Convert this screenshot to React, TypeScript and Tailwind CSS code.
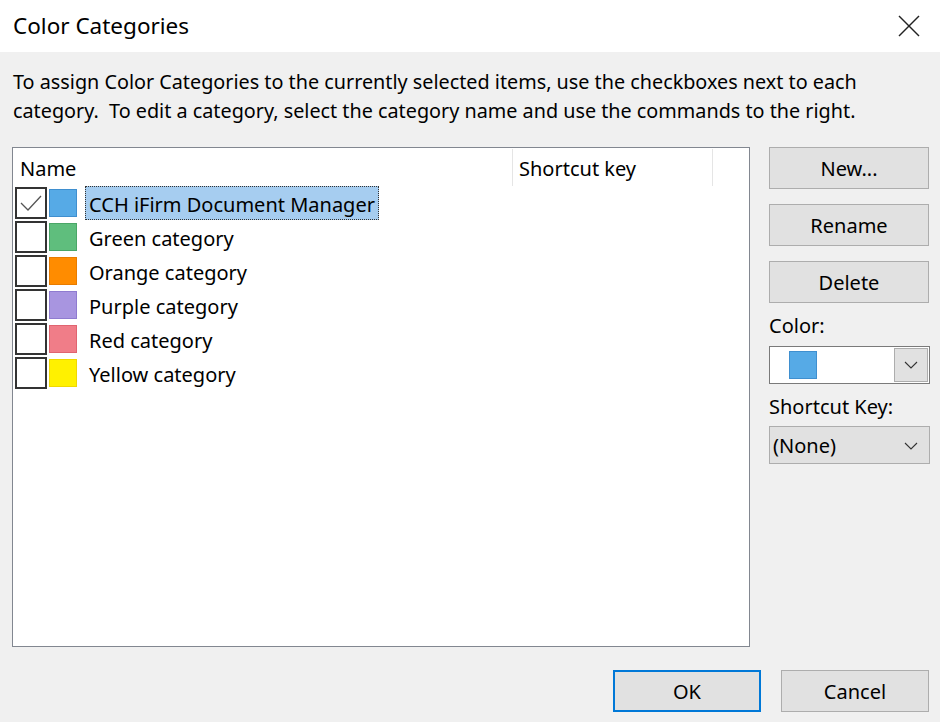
import React from 'react';

const font = { fontFamily: '"Noto Sans", "Open Sans", Arial, sans-serif' };

type Category = { name: string; color: string; border: string; checked?: boolean; selected?: boolean };

const categories: Category[] = [
  { name: 'CCH iFirm Document Manager', color: '#56aae6', border: '#3f8fcf', checked: true, selected: true },
  { name: 'Green category', color: '#5fbe7d', border: '#4aa667' },
  { name: 'Orange category', color: '#ff8c00', border: '#e87c00' },
  { name: 'Purple category', color: '#a895e0', border: '#8f7bd0' },
  { name: 'Red category', color: '#f07d88', border: '#e06470' },
  { name: 'Yellow category', color: '#fff100', border: '#f0d800' },
];

const Chevron = () => (
  <svg width="14" height="8" viewBox="0 0 14 8" fill="none">
    <polyline points="1,1 7,7 13,1" stroke="#333" strokeWidth="1.1" />
  </svg>
);

const CategoryRow: React.FC<{ cat: Category }> = ({ cat }) => (
  <div className="flex h-[34px] items-start">
    <div className="ml-[2px] flex h-[32px] w-[32px] items-center justify-center border-2 border-[#333333] bg-white">
      {cat.checked && (
        <svg width="24" height="20" viewBox="0 0 24 20" fill="none">
          <polyline points="2,10 9,17 22,3" stroke="#555" strokeWidth="1.3" />
        </svg>
      )}
    </div>
    <div
      className="ml-[2px] mt-[2px] h-[28px] w-[28px] border"
      style={{ backgroundColor: cat.color, borderColor: cat.border }}
    />
    <div
      className={
        cat.selected
          ? 'ml-[8px] -mt-px flex h-[34px] items-center border border-dotted border-[#333] bg-[#a6cdf0] px-[3px] pt-[3px] text-[20px] text-black'
          : 'ml-[8px] flex h-[32px] items-center px-[4px] pt-[3px] text-[20px] text-black'
      }
    >
      {cat.name}
    </div>
  </div>
);

const SideButton: React.FC<{ label: string }> = ({ label }) => (
  <button className="flex h-[42px] w-[160px] items-center justify-center border border-[#adadad] bg-[#e1e1e1] pt-px text-[20px] text-black">
    {label}
  </button>
);

export default function App() {
  return (
    <div className="flex h-[722px] w-[940px] flex-col overflow-hidden bg-[#f0f0f0]" style={font}>
      <div className="flex h-[52px] shrink-0 items-center justify-between bg-white pl-[13px] pr-[20px]">
        <span className="text-[22.5px] text-black">Color Categories</span>
        <svg width="22" height="22" viewBox="0 0 22 22" fill="none">
          <line x1="1" y1="1" x2="21" y2="21" stroke="#222" strokeWidth="1.4" />
          <line x1="21" y1="1" x2="1" y2="21" stroke="#222" strokeWidth="1.4" />
        </svg>
      </div>

      <p className="mt-[15px] pl-[13px] text-[19.8px] leading-[29px] text-black">
        To assign Color Categories to the currently selected items, use the checkboxes next to each
        <br />
        category.&nbsp; To edit a category, select the category name and use the commands to the right.
      </p>

      <div className="mt-[22px] flex pl-[12px]">
        <div className="h-[500px] w-[738px] border border-[#828790] bg-white">
          <div className="flex h-[39px] items-stretch text-[20px] text-black">
            <div className="flex w-[499px] items-center pl-[7px] pt-[3px]">Name</div>
            <div className="my-[1px] w-px bg-[#e5e5e5]" />
            <div className="flex w-[199px] items-center pl-[6px] pt-[3px]">Shortcut key</div>
            <div className="my-[1px] w-px bg-[#e5e5e5]" />
          </div>
          <div>
            {categories.map((c) => (
              <CategoryRow key={c.name} cat={c} />
            ))}
          </div>
        </div>

        <div className="ml-[19px] flex w-[161px] flex-col">
          <div className="flex flex-col gap-[15px]">
            <SideButton label="New..." />
            <SideButton label="Rename" />
            <SideButton label="Delete" />
          </div>
          <div className="mt-[9px] text-[20px] leading-[28px] text-black">Color:</div>
          <div className="mt-[6px] flex h-[38px] w-[161px] items-center border border-[#7a7a7a] bg-white">
            <div className="ml-[19px] h-[28px] w-[28px] border border-[#3f8fcf] bg-[#56aae6]" />
            <div className="ml-auto mr-[1px] flex h-[34px] w-[34px] items-center justify-center border border-[#adadad] bg-[#e1e1e1]">
              <Chevron />
            </div>
          </div>
          <div className="mt-[9px] text-[20px] leading-[28px] text-black">Shortcut Key:</div>
          <div className="mt-[5px] flex h-[38px] w-[161px] items-center justify-between border border-[#adadad] bg-[#e1e1e1] pl-[3px] pr-[11px] pt-px text-[20px] text-black">
            <span>(None)</span>
            <Chevron />
          </div>
        </div>
      </div>

      <div className="mt-[23px] flex justify-end gap-[20px] pr-[11px]">
        <button className="flex h-[42px] w-[148px] items-center justify-center border-2 border-[#0078d7] bg-[#e1e1e1] pt-px text-[20px] text-black">
          OK
        </button>
        <button className="flex h-[42px] w-[148px] items-center justify-center border border-[#adadad] bg-[#e1e1e1] pt-px text-[20px] text-black">
          Cancel
        </button>
      </div>
    </div>
  );
}
